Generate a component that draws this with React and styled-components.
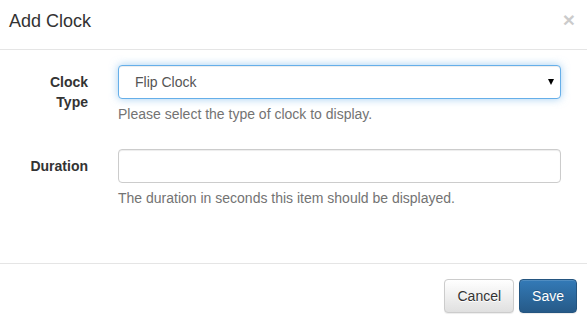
import React, { useState } from "react";
import styled, { createGlobalStyle } from "styled-components";

const GlobalStyle = createGlobalStyle`
  html, body {
    margin: 0;
    padding: 0;
    background: #fff;
  }
  body {
    font-family: "Liberation Sans", Arial, sans-serif;
    font-size: 14px;
    line-height: 1.42857;
    color: #333;
  }
  * { box-sizing: border-box; }
`;

const Modal = styled.div`
  display: flex;
  flex-direction: column;
  width: 587px;
  height: 323px;
  background: #fff;
`;

const Header = styled.div`
  display: flex;
  justify-content: space-between;
  align-items: flex-start;
  padding: 9px 12px 14px 9px;
  border-bottom: 1px solid #e5e5e5;
`;

const Title = styled.h4`
  margin: 0;
  font-size: 18px;
  font-weight: 500;
  line-height: 1.42857;
  color: #333;
`;

const Close = styled.button`
  padding: 0;
  margin-top: 0;
  border: 0;
  background: transparent;
  font-family: "Liberation Sans", Arial, sans-serif;
  font-size: 21px;
  font-weight: bold;
  line-height: 1;
  color: #000;
  opacity: 0.2;
  cursor: pointer;
`;

const Body = styled.div`
  padding: 15px 0 30px 0;
`;

const FormGroup = styled.div`
  display: grid;
  grid-template-columns: 88px 443px;
  column-gap: 30px;
  margin-bottom: 15px;
`;

const Label = styled.label`
  padding-top: 7px;
  text-align: right;
  font-weight: bold;
  line-height: 20px;
  color: #333;
`;

const Field = styled.div`
  display: flex;
  flex-direction: column;
`;

const SelectWrap = styled.div`
  position: relative;
`;

const Select = styled.select`
  display: block;
  width: 100%;
  height: 34px;
  padding: 6px 24px 6px 16px;
  font-family: "Liberation Sans", Arial, sans-serif;
  font-size: 14px;
  color: #555;
  background: #fff;
  border: 1px solid ${(p) => (p.$focused ? "#66afe9" : "#ccc")};
  border-radius: 4px;
  outline: 0;
  appearance: none;
  box-shadow: ${(p) =>
    p.$focused
      ? "inset 0 1px 1px rgba(0,0,0,.075), 0 0 8px rgba(102,175,233,.6)"
      : "inset 0 1px 1px rgba(0,0,0,.075)"};
`;

const Caret = styled.span`
  position: absolute;
  right: 7px;
  top: 14px;
  width: 0;
  height: 0;
  border-left: 3.5px solid transparent;
  border-right: 3.5px solid transparent;
  border-top: 6px solid #000;
  pointer-events: none;
`;

const Input = styled.input`
  display: block;
  width: 100%;
  height: 34px;
  padding: 6px 12px;
  font-family: "Liberation Sans", Arial, sans-serif;
  font-size: 14px;
  color: #555;
  background: #fff;
  border: 1px solid #ccc;
  border-radius: 4px;
  outline: 0;
  box-shadow: inset 0 1px 1px rgba(0,0,0,.075);
`;

const Help = styled.span`
  display: block;
  margin: 5px 0 10px;
  line-height: 20px;
  color: #737373;
`;

const Footer = styled.div`
  display: flex;
  justify-content: flex-end;
  gap: 5px;
  padding: 15px 10px 10px;
  border-top: 1px solid #e5e5e5;
`;

const Button = styled.button`
  height: 34px;
  padding: 6px 12px;
  font-family: "Liberation Sans", Arial, sans-serif;
  font-size: 14px;
  line-height: 20px;
  border-radius: 4px;
  cursor: pointer;
  color: ${(p) => (p.$primary ? "#fff" : "#333")};
  border: 1px solid ${(p) => (p.$primary ? "#245580" : "#ccc")};
  background-image: ${(p) =>
    p.$primary
      ? "linear-gradient(to bottom, #337ab7 0%, #265a88 100%)"
      : "linear-gradient(to bottom, #fff 0%, #e0e0e0 100%)"};
  text-shadow: ${(p) => (p.$primary ? "0 -1px 0 rgba(0,0,0,.2)" : "0 1px 0 #fff")};
  box-shadow: inset 0 1px 0 rgba(255,255,255,.15), 0 1px 1px rgba(0,0,0,.075);
`;

export default function App() {
  const [clockType, setClockType] = useState("flip");
  const [duration, setDuration] = useState("");

  return (
    <>
      <GlobalStyle />
      <Modal>
        <Header>
          <Title>Add Clock</Title>
          <Close aria-label="Close">×</Close>
        </Header>
        <Body>
          <FormGroup>
            <Label htmlFor="clockType">
              Clock
              <br />
              Type
            </Label>
            <Field>
              <SelectWrap>
                <Select
                  id="clockType"
                  $focused
                  value={clockType}
                  onChange={(e) => setClockType(e.target.value)}
                >
                  <option value="flip">Flip Clock</option>
                  <option value="analogue">Analogue Clock</option>
                  <option value="digital">Digital Clock</option>
                </Select>
                <Caret />
              </SelectWrap>
              <Help>Please select the type of clock to display.</Help>
            </Field>
          </FormGroup>
          <FormGroup>
            <Label htmlFor="duration">Duration</Label>
            <Field>
              <Input
                id="duration"
                value={duration}
                onChange={(e) => setDuration(e.target.value)}
              />
              <Help>The duration in seconds this item should be displayed.</Help>
            </Field>
          </FormGroup>
        </Body>
        <Footer>
          <Button>Cancel</Button>
          <Button $primary>Save</Button>
        </Footer>
      </Modal>
    </>
  );
}
